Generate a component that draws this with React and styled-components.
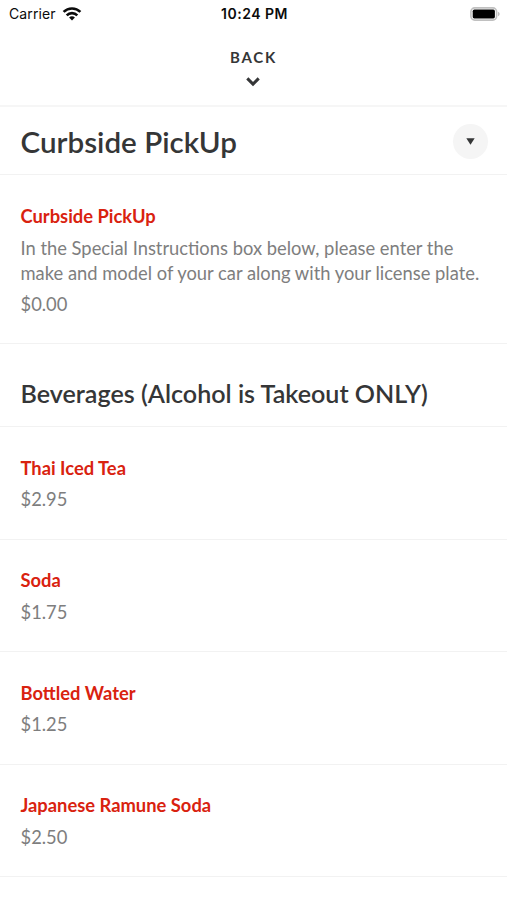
import styled, { createGlobalStyle } from "styled-components";

const color = {
  white: "#ffffff",
  black: "#0b0b0b",
  dark: "#353637",
  gray: "#7e7e7e",
  line: "#f2f2f2",
  circle: "#f5f5f5",
  red: "#d9220f",
};

const pickup = {
  name: "Curbside PickUp",
  description:
    "In the Special Instructions box below, please enter the make and model of your car along with your license plate.",
  price: "$0.00",
};

const beverages = [
  { name: "Thai Iced Tea", price: "$2.95" },
  { name: "Soda", price: "$1.75" },
  { name: "Bottled Water", price: "$1.25" },
  { name: "Japanese Ramune Soda", price: "$2.50" },
];

const MenuItem = ({ item, height }) => (
  <Item $height={height}>
    <ItemName>{item.name}</ItemName>
    {item.description && <Description>{item.description}</Description>}
    <Price>{item.price}</Price>
  </Item>
);

const App = () => {
  return (
    <Screen>
      <GlobalStyle />
      <StatusBar>
        <Carrier>
          Carrier
          <svg width="20" height="14" viewBox="0 0 20 14">
            <g fill="none" stroke={color.black} strokeWidth="2.6">
              <path d="M1.6 4.9a12 12 0 0 1 16.8 0" />
              <path d="M4.7 8.3a7.5 7.5 0 0 1 10.6 0" />
            </g>
            <path d="M10 13.6 7.1 10.6a4 4 0 0 1 5.8 0z" fill={color.black} />
          </svg>
        </Carrier>
        <Time>10:24 PM</Time>
        <Battery>
          <svg width="30" height="14" viewBox="0 0 30 14">
            <rect
              x="0.9"
              y="0.9"
              width="25.7"
              height="12.2"
              rx="3.8"
              fill="none"
              stroke="#c0c0c0"
              strokeWidth="1.6"
            />
            <rect x="2.7" y="2.6" width="22.2" height="8.8" rx="1.6" fill="#000" />
            <path d="M28 4.8c2.2.8 2.2 3.6 0 4.4z" fill="#c0c0c0" />
          </svg>
        </Battery>
      </StatusBar>
      <BackButton>
        BACK
        <svg width="15" height="10" viewBox="0 0 15 10">
          <path
            d="M1.3 1.4 7 7.1l5.7-5.7"
            fill="none"
            stroke={color.dark}
            strokeWidth="3"
          />
        </svg>
      </BackButton>
      <TitleBar>
        <Title>Curbside PickUp</Title>
        <Toggle>
          <svg width="9" height="7" viewBox="0 0 9 7">
            <path d="M0.3 0.2h8.4L4.5 6.8z" fill={color.dark} />
          </svg>
        </Toggle>
      </TitleBar>
      <MenuItem item={pickup} height={169} />
      <SubTitle>Beverages (Alcohol is Takeout ONLY)</SubTitle>
      {beverages.map((item) => (
        <MenuItem key={item.name} item={item} height={112.5} />
      ))}
    </Screen>
  );
};

const GlobalStyle = createGlobalStyle`
  * {
    box-sizing: border-box;
  }
  body {
    margin: 0;
    background-color: ${color.white};
    font-family: Lato, sans-serif;
  }
`;

const Screen = styled.div`
  width: 100%;
  height: 900px;
  overflow: hidden;
  background-color: ${color.white};
`;

const StatusBar = styled.div`
  display: grid;
  grid-template-columns: 1fr auto 1fr;
  align-items: center;
  height: 27px;
  padding: 0 7px 0 9px;
  font-family: Inter, "Liberation Sans", sans-serif;
  font-size: 14px;
  line-height: 27px;
  color: ${color.black};
`;

const Carrier = styled.div`
  display: flex;
  align-items: center;
  gap: 6px;
  letter-spacing: 0.1px;
`;

const Time = styled.div`
  font-weight: 600;
  letter-spacing: 0.5px;
`;

const Battery = styled.div`
  display: flex;
  justify-content: flex-end;
`;

const BackButton = styled.div`
  display: flex;
  flex-direction: column;
  align-items: center;
  gap: 10px;
  height: 80px;
  padding-top: 20px;
  border-bottom: 2px solid #f6f6f6;
  font-size: 15px;
  font-weight: 700;
  line-height: 20px;
  letter-spacing: 1.8px;
  color: ${color.dark};
`;

const TitleBar = styled.div`
  display: flex;
  align-items: center;
  justify-content: space-between;
  height: 68px;
  padding: 1px 19px 0 20.5px;
  border-bottom: 1px solid ${color.line};
`;

const Title = styled.h1`
  margin: 0;
  padding-top: 1px;
  font-size: 29.6px;
  font-weight: 600;
  line-height: 36px;
  color: ${color.dark};
`;

const Toggle = styled.div`
  display: flex;
  align-items: center;
  justify-content: center;
  width: 35px;
  height: 35px;
  border-radius: 50%;
  background-color: ${color.circle};
`;

const Item = styled.div`
  height: ${({ $height }) => $height}px;
  padding: 28.5px 20.5px 0;
  border-bottom: 1px solid ${color.line};
`;

const ItemName = styled.div`
  font-size: 18.35px;
  font-weight: 700;
  line-height: 24px;
  color: ${color.red};
`;

const Description = styled.div`
  margin: 8px 0 -1px;
  font-size: 18.35px;
  line-height: 25px;
  color: ${color.gray};
`;

const Price = styled.div`
  margin-top: 7.5px;
  font-size: 18.35px;
  line-height: 24.5px;
  color: ${color.gray};
`;

const SubTitle = styled.h2`
  height: 83px;
  margin: 0;
  padding: 33px 20.5px 0;
  border-bottom: 1px solid ${color.line};
  font-size: 25.1px;
  font-weight: 600;
  line-height: 32px;
  color: ${color.dark};
`;

export default App;
